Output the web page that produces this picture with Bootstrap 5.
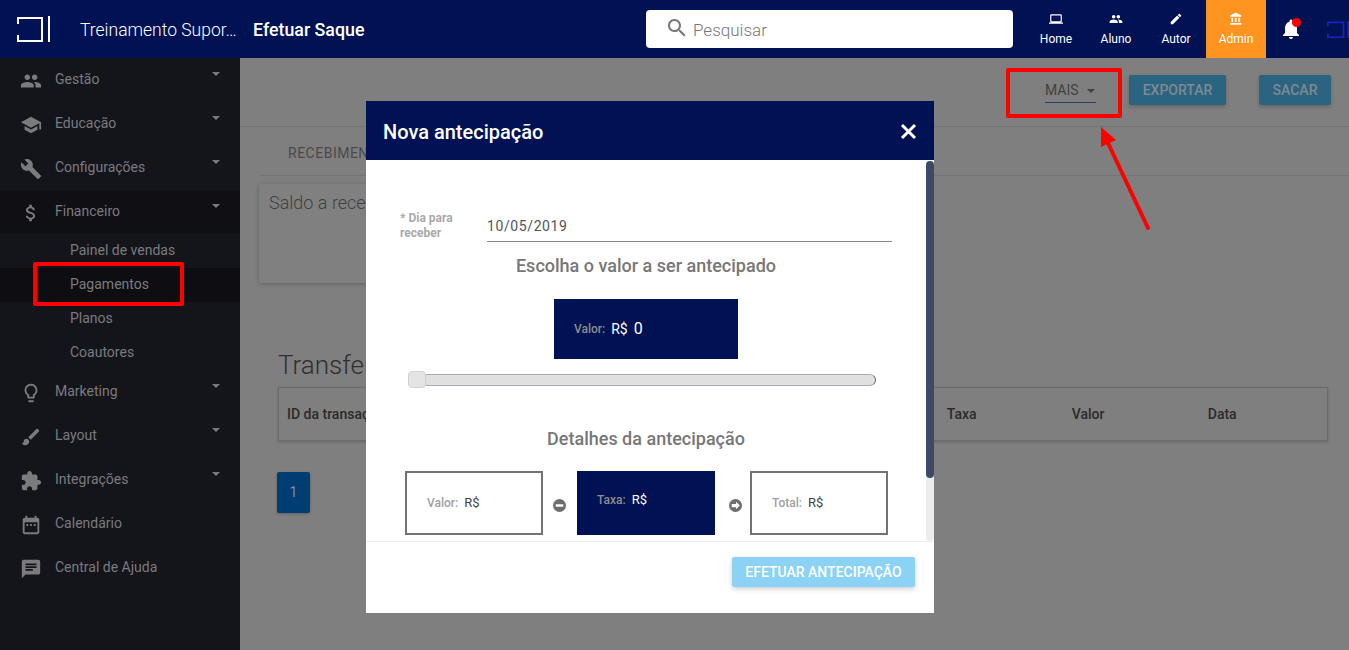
<!DOCTYPE html>
<html lang="en">
<head>
  <meta charset="UTF-8" />
  <title>Efetuar Saque</title>
  <meta name="viewport" content="width=device-width, initial-scale=1.0" />
  <link href="https://cdn.jsdelivr.net/npm/bootstrap@5.3.2/dist/css/bootstrap.min.css" rel="stylesheet" />
  <style>
    html, body { height: 650px; overflow: hidden; }
    body { font-family: Roboto, "Liberation Sans", sans-serif; background-color: #7f7f7f; position: relative; }
    svg { fill: currentColor; display: block; flex-shrink: 0; }

    /* top bar */
    .top-bar { height: 58px; background-color: #001254; color: #fff; }
    .brand-logo { width: 33px; height: 26px; margin-left: 17px; margin-right: 30px; }
    .course-name { width: 162px; font-size: 17.5px; font-weight: 300; white-space: nowrap; padding-top: 2px; }
    .page-name { font-size: 17.8px; font-weight: 500; margin-left: 11px; width: 393px; padding-top: 2px; }
    .search-box { width: 367px; height: 38px; background: #fff; border-radius: 4px; color: #777; font-size: 17px; font-weight: 300; padding-left: 19px; gap: 4px; margin-right: 13px; }
    .search-box span { padding-top: 3px; }
    .search-box svg { margin-top: -3px; }
    .top-link { width: 60px; height: 58px; font-size: 12px; padding-top: 12px; gap: 4px; color: #fff; }
    .top-link.is-active { background-color: #ff9421; }
    .bell-wrap { position: relative; width: 50px; height: 58px; }
    .bell-dot { position: absolute; width: 9px; height: 9px; border-radius: 50%; background: #f00; left: 26px; top: 18px; }
    .corner-logo { width: 22px; height: 17px; margin-top: 21px; margin-left: 11px; }

    /* sidebar */
    .side-nav { width: 240px; height: 592px; background-color: #14141b; color: #7b7b7e; font-size: 14px; }
    .side-row { height: 44px; padding-left: 20px; padding-right: 19px; }
    .side-row svg { width: 22px; height: 22px; margin-top: 1px; margin-right: 13px; }
    .side-row span { margin-top: -1px; }
    .side-row.is-open { background-color: #0f0f14; }
    .side-caret { width: 0; height: 0; border: 4px solid transparent; border-top-color: #7b7b7e; border-bottom: 0; margin-left: auto; margin-right: 1px; margin-top: -12px; }
    .sub-row { height: 34px; padding-left: 70px; padding-top: 6px; }
    .sub-row.is-current { background-color: #0e0e12; }

    /* page behind the modal */
    .page-main { height: 592px; width: 1109px; color: #3b3b3b; }
    .action-bar { height: 69px; border-bottom: 1px solid #747474; padding-top: 17px; }
    .more-btn { width: 51px; height: 25px; margin-right: 33px; font-size: 14px; color: #414141; border-bottom: 1px solid #1f4468; margin-top: 3px; }
    .more-btn i { width: 0; height: 0; border: 4px solid transparent; border-top-color: #414141; border-bottom: 0; margin-left: 8px; margin-top: 2px; }
    .dim-btn { height: 30px; background-color: #2b6480; color: #7f8a90; font-size: 14px; font-weight: 500; border-radius: 2px; box-shadow: 0 2px 4px rgba(0,0,0,.2); }
    .export-btn { width: 97px; margin-right: 33px; }
    .sacar-btn { width: 72px; margin-right: 18px; }
    .tab-row { margin-left: 19px; height: 49px; border-bottom: 1px solid #747474; padding-left: 29px; padding-top: 16px; font-size: 14px; color: #4a4a4a; letter-spacing: .5px; }
    .saldo-card { margin: 8px 0 0 19px; width: 400px; height: 99px; background: #808080; border-radius: 2px; box-shadow: 0 1px 4px rgba(0,0,0,.25); padding: 5px 10px; font-size: 18px; font-weight: 300; color: #404040; }
    .transfer-title { font-size: 26px; font-weight: 300; margin: 67px 0 7px 38px; line-height: 30px; color: #2f2f2f; }
    .transfer-table { margin-left: 38px; width: 1050px; height: 54px; border: 1px solid #6b6b6b; box-shadow: 0 1px 3px rgba(0,0,0,.2); font-size: 14px; font-weight: 500; color: #2b2b2b; padding-left: 8px; }
    .col-taxa { margin-left: 562px; width: 125px; }
    .col-valor { width: 136px; }
    .page-one { margin: 31px 0 0 37px; width: 33px; height: 41px; background: #003d73; color: #7f8f9f; font-size: 14px; border-radius: 2px; box-shadow: 0 1px 3px rgba(0,0,0,.25); }

    /* modal */
    .modal-place { position: absolute; left: 366px; top: 101px; width: 568px; height: 512px; }
    .modal-place .modal-content { height: 512px; border: 0; border-radius: 0; background: #fff; }
    .modal-place .modal-header { height: 59px; background-color: #001254; color: #fff; border: 0; border-radius: 0; padding: 2px 17px 0; flex-shrink: 0; }
    .modal-place .modal-title { font-size: 20px; font-weight: 500; }
    .close-x { width: 17px; height: 17px; stroke: #fff; stroke-width: 3; }
    .scroll-body { position: relative; height: 380px; margin-top: 1px; overflow: hidden; flex: none; padding: 0; }
    .scroll-track { position: absolute; right: 0; top: 0; width: 8px; height: 380px; background: #ececec; border-radius: 4px; }
    .scroll-thumb { width: 8px; height: 317px; background: #3c4a68; border-radius: 4px; }
    .date-row { padding: 50px 34px 0; height: 81px; }
    .date-label { width: 87px; font-size: 12px; font-weight: 700; color: #a9a9a9; line-height: 15px; }
    .date-value { width: 405px; height: 31px; border-bottom: 1px solid #8a8a8a; font-size: 14px; color: #555; letter-spacing: .6px; padding-top: 5px; }
    .section-title { font-size: 18px; font-weight: 500; color: #777; text-align: center; width: 560px; line-height: 20px; }
    .choose-title { margin-top: 14px; }
    .value-box { width: 184px; height: 60px; margin: 23px 0 0 188px; background: #001254; color: #fff; padding-left: 20px; font-size: 14px; }
    .tiny-label { font-size: 12px; font-weight: 500; color: #8d8d8d; margin-right: 6px; }
    .big-zero { font-size: 16px; margin-left: 6px; }
    .slider-track { position: relative; width: 458px; height: 12px; margin: 15px 0 0 52px; background: #e0e0e0; border: 1px solid #a9a9b3; border-right-color: #66666e; border-radius: 0 6px 6px 0; }
    .slider-thumb { position: absolute; left: -11px; top: -4px; width: 18px; height: 17px; background: #e4e4e4; border: 1px solid #d2d2d2; border-radius: 4px; }
    .detail-title { margin-top: 43px; }
    .detail-row { margin: 22px 0 0 39px; width: 483px; }
    .detail-box { width: 138px; height: 64px; border: 2px solid #737373; padding-left: 20px; font-size: 13px; color: #444; }
    .detail-box.is-dark { background: #001254; border-color: #001254; color: #fff; padding-left: 18px; padding-bottom: 6px; }
    .detail-box .tiny-label { color: #a0a0a0; }
    .detail-box.is-dark .tiny-label { color: #8d8d8d; }
    .sign-icon { width: 13px; height: 13px; margin-top: 4px; color: #6d6d6d; }
    .sign-minus { width: 34px; padding-left: 10px; }
    .sign-equal { width: 35px; padding-left: 14px; }
    .modal-place .modal-footer { height: 72px; border-top: 1px solid #eee; padding: 15px 19px 0 0; align-items: flex-start; border-radius: 0; flex: none; }
    .antecipar-btn { width: 183px; height: 30px; margin: 0; padding-top: 1px; background: #8bd2f5; color: #fff; font-size: 14px; font-weight: 500; border-radius: 2px; box-shadow: 0 2px 5px rgba(0,0,0,.2); }

    /* red annotations */
    .note-box { position: absolute; border: 4px solid #f00; border-radius: 2px; }
    .note-more { left: 1006px; top: 68px; width: 116px; height: 50px; }
    .note-pay { left: 33px; top: 262px; width: 151px; height: 44px; }
    .note-arrow { position: absolute; left: 1090px; top: 115px; width: 70px; height: 125px; }
  </style>
</head>
<body>
  <header class="top-bar d-flex align-items-center">
    <svg class="brand-logo" viewBox="0 0 33 26" style="fill:none;stroke:#fff;stroke-width:2"><path d="M1 8V2h24v23H1v-6M32 0v26"/></svg>
    <div class="course-name">Treinamento Supor…</div>
    <div class="page-name">Efetuar Saque</div>
    <div class="search-box d-flex align-items-center">
      <svg width="24" height="24" viewBox="0 0 24 24"><path d="M15.5 14h-.79l-.28-.27C15.41 12.59 16 11.11 16 9.5 16 5.91 13.09 3 9.5 3S3 5.91 3 9.5 5.91 16 9.5 16c1.61 0 3.09-.59 4.23-1.57l.27.28v.79l5 4.99L20.49 19l-4.99-5zm-6 0C7.01 14 5 11.99 5 9.5S7.01 5 9.5 5 14 7.01 14 9.5 11.99 14 9.5 14z"/></svg>
      <span>Pesquisar</span>
    </div>
    <a class="top-link d-flex flex-column align-items-center text-decoration-none">
      <svg width="14" height="14" viewBox="0 0 24 24"><path d="M20 18c1.1 0 1.99-.9 1.99-2L22 6c0-1.1-.9-2-2-2H4c-1.1 0-2 .9-2 2v10c0 1.1.9 2 2 2H0v2h24v-2h-4zM4 6h16v10H4V6z"/></svg>
      Home
    </a>
    <a class="top-link d-flex flex-column align-items-center text-decoration-none">
      <svg width="14" height="14" viewBox="0 0 24 24"><path d="M16 11c1.66 0 2.99-1.34 2.99-3S17.66 5 16 5c-1.66 0-3 1.34-3 3s1.34 3 3 3zm-8 0c1.66 0 2.99-1.34 2.99-3S9.66 5 8 5C6.34 5 5 6.34 5 8s1.34 3 3 3zm0 2c-2.33 0-7 1.17-7 3.5V19h14v-2.5c0-2.33-4.67-3.5-7-3.5zm8 0c-.29 0-.62.02-.97.05 1.16.84 1.97 1.97 1.97 3.45V19h6v-2.5c0-2.33-4.67-3.5-7-3.5z"/></svg>
      Aluno
    </a>
    <a class="top-link d-flex flex-column align-items-center text-decoration-none">
      <svg width="14" height="14" viewBox="0 0 24 24"><path d="M3 17.25V21h3.75L17.81 9.94l-3.75-3.75L3 17.25zM20.71 7.04c.39-.39.39-1.02 0-1.41l-2.34-2.34c-.39-.39-1.02-.39-1.41 0l-1.83 1.83 3.75 3.75 1.83-1.83z"/></svg>
      Autor
    </a>
    <a class="top-link is-active d-flex flex-column align-items-center text-decoration-none">
      <svg width="14" height="14" viewBox="0 0 24 24"><path d="M4 10v7h3v-7H4zm6 0v7h3v-7h-3zM2 22h19v-3H2v3zm14-12v7h3v-7h-3zm-4.5-9L2 6v2h19V6l-9.5-5z"/></svg>
      Admin
    </a>
    <div class="bell-wrap d-flex align-items-center justify-content-center">
      <svg width="24" height="24" viewBox="0 0 24 24"><path d="M12 22c1.1 0 2-.9 2-2h-4c0 1.1.89 2 2 2zm6-6v-5c0-3.07-1.64-5.64-4.5-6.32V4c0-.83-.67-1.5-1.5-1.5s-1.5.67-1.5 1.5v.68C7.63 5.36 6 7.92 6 11v5l-2 2v1h16v-1l-2-2z"/></svg>
      <span class="bell-dot"></span>
    </div>
    <svg class="corner-logo align-self-start" viewBox="0 0 33 26" style="fill:none;stroke:#1b22c4;stroke-width:2.6"><path d="M1 8V2h24v23H1v-6M32 0v26"/></svg>
  </header>

  <div class="d-flex">
    <nav class="side-nav">
      <div class="side-row d-flex align-items-center">
        <svg viewBox="0 0 24 24"><path d="M16 11c1.66 0 2.99-1.34 2.99-3S17.66 5 16 5c-1.66 0-3 1.34-3 3s1.34 3 3 3zm-8 0c1.66 0 2.99-1.34 2.99-3S9.66 5 8 5C6.34 5 5 6.34 5 8s1.34 3 3 3zm0 2c-2.33 0-7 1.17-7 3.5V19h14v-2.5c0-2.33-4.67-3.5-7-3.5zm8 0c-.29 0-.62.02-.97.05 1.16.84 1.97 1.97 1.97 3.45V19h6v-2.5c0-2.33-4.67-3.5-7-3.5z"/></svg>
        <span>Gestão</span><i class="side-caret"></i>
      </div>
      <div class="side-row d-flex align-items-center">
        <svg viewBox="0 0 24 24"><path d="M5 13.18v4L12 21l7-3.82v-4L12 17l-7-3.82zM12 3L1 9l11 6 9-4.91V17h2V9L12 3z"/></svg>
        <span>Educação</span><i class="side-caret"></i>
      </div>
      <div class="side-row d-flex align-items-center">
        <svg viewBox="0 0 24 24"><path d="M22.7 19l-9.1-9.1c.9-2.3.4-5-1.5-6.9-2-2-5-2.4-7.4-1.3L9 6 6 9 1.6 4.7C.4 7.1.9 10.1 2.9 12.1c1.9 1.9 4.6 2.4 6.9 1.5l9.1 9.1c.4.4 1 .4 1.4 0l2.3-2.3c.5-.4.5-1.1.1-1.4z"/></svg>
        <span>Configurações</span><i class="side-caret"></i>
      </div>
      <div class="side-row is-open d-flex align-items-center">
        <svg viewBox="0 0 24 24"><path d="M11.8 10.9c-2.27-.59-3-1.2-3-2.15 0-1.09 1.01-1.85 2.7-1.85 1.78 0 2.44.85 2.5 2.1h2.21c-.07-1.72-1.12-3.3-3.21-3.81V3h-3v2.16c-1.94.42-3.5 1.68-3.5 3.61 0 2.31 1.91 3.46 4.7 4.13 2.5.6 3 1.48 3 2.41 0 .69-.49 1.79-2.7 1.79-2.06 0-2.87-.92-2.98-2.1h-2.2c.12 2.19 1.76 3.42 3.68 3.83V21h3v-2.15c1.95-.37 3.5-1.5 3.5-3.55 0-2.84-2.43-3.81-4.7-4.4z"/></svg>
        <span>Financeiro</span><i class="side-caret"></i>
      </div>
      <div class="sub-row">Painel de vendas</div>
      <div class="sub-row is-current">Pagamentos</div>
      <div class="sub-row">Planos</div>
      <div class="sub-row">Coautores</div>
      <div class="side-row d-flex align-items-center">
        <svg viewBox="0 0 24 24"><path d="M9 21c0 .55.45 1 1 1h4c.55 0 1-.45 1-1v-1H9v1zm3-19C8.14 2 5 5.14 5 9c0 2.38 1.19 4.47 3 5.74V17c0 .55.45 1 1 1h6c.55 0 1-.45 1-1v-2.26c1.81-1.27 3-3.36 3-5.74 0-3.86-3.14-7-7-7zm2.85 11.1l-.85.6V16h-4v-2.3l-.85-.6C7.8 12.16 7 10.63 7 9c0-2.76 2.24-5 5-5s5 2.24 5 5c0 1.63-.8 3.16-2.15 4.1z"/></svg>
        <span>Marketing</span><i class="side-caret"></i>
      </div>
      <div class="side-row d-flex align-items-center">
        <svg viewBox="0 0 24 24"><path d="M7 14c-1.66 0-3 1.34-3 3 0 1.31-1.16 2-2 2 .92 1.22 2.49 2 4 2 2.21 0 4-1.79 4-4 0-1.66-1.34-3-3-3zm13.71-9.37l-1.34-1.34c-.39-.39-1.02-.39-1.41 0L9 12.25 11.75 15l8.96-8.96c.39-.39.39-1.02 0-1.41z"/></svg>
        <span>Layout</span><i class="side-caret"></i>
      </div>
      <div class="side-row d-flex align-items-center">
        <svg viewBox="0 0 24 24"><path d="M20.5 11H19V7c0-1.1-.9-2-2-2h-4V3.5C13 2.12 11.88 1 10.5 1S8 2.12 8 3.5V5H4c-1.1 0-1.99.9-1.99 2v3.8H3.5c1.49 0 2.7 1.21 2.7 2.7s-1.21 2.7-2.7 2.7H2V20c0 1.1.9 2 2 2h3.8v-1.5c0-1.49 1.21-2.7 2.7-2.7 1.49 0 2.7 1.21 2.7 2.7V22H17c1.1 0 2-.9 2-2v-4h1.5c1.38 0 2.5-1.12 2.5-2.5S21.88 11 20.5 11z"/></svg>
        <span>Integrações</span><i class="side-caret"></i>
      </div>
      <div class="side-row d-flex align-items-center">
        <svg viewBox="0 0 24 24"><path d="M19 4h-1V2h-2v2H8V2H6v2H5c-1.1 0-2 .9-2 2v14c0 1.1.9 2 2 2h14c1.1 0 2-.9 2-2V6c0-1.1-.9-2-2-2zm0 16H5V9h14v11zM7 11h2v2H7zm4 0h2v2h-2zm4 0h2v2h-2z"/></svg>
        <span>Calendário</span>
      </div>
      <div class="side-row d-flex align-items-center">
        <svg viewBox="0 0 24 24"><path d="M20 2H4c-1.1 0-1.99.9-1.99 2L2 22l4-4h14c1.1 0 2-.9 2-2V4c0-1.1-.9-2-2-2zM6 9h12v2H6V9zm8 5H6v-2h8v2zm4-6H6V6h12v2z"/></svg>
        <span>Central de Ajuda</span>
      </div>
    </nav>

    <main class="page-main">
      <div class="action-bar d-flex justify-content-end">
        <div class="more-btn d-flex align-items-center">MAIS<i></i></div>
        <div class="dim-btn export-btn d-flex align-items-center justify-content-center">EXPORTAR</div>
        <div class="dim-btn sacar-btn d-flex align-items-center justify-content-center">SACAR</div>
      </div>
      <div class="tab-row">RECEBIMENTOS</div>
      <div class="saldo-card">Saldo a receber</div>
      <h2 class="transfer-title">Transferências</h2>
      <div class="transfer-table d-flex align-items-center">
        <span>ID da transação</span>
        <span class="col-taxa">Taxa</span>
        <span class="col-valor">Valor</span>
        <span>Data</span>
      </div>
      <div class="page-one d-flex align-items-center justify-content-center">1</div>
    </main>
  </div>

  <div class="modal-place">
    <div class="modal-content">
      <div class="modal-header">
        <h5 class="modal-title">Nova antecipação</h5>
        <svg class="close-x ms-auto" viewBox="0 0 17 17"><path d="M2 2l13 13M15 2L2 15"/></svg>
      </div>
      <div class="modal-body scroll-body">
        <div class="date-row d-flex">
          <div class="date-label">* Dia para receber</div>
          <div class="date-value">10/05/2019</div>
        </div>
        <div class="section-title choose-title">Escolha o valor a ser antecipado</div>
        <div class="value-box d-flex align-items-center">
          <span class="tiny-label">Valor:</span>R$<span class="big-zero">0</span>
        </div>
        <div class="slider-track"><div class="slider-thumb"></div></div>
        <div class="section-title detail-title">Detalhes da antecipação</div>
        <div class="detail-row d-flex align-items-center">
          <div class="detail-box d-flex align-items-center"><span class="tiny-label">Valor:</span>R$</div>
          <div class="sign-minus">
            <svg class="sign-icon" viewBox="0 0 12 12"><path fill-rule="evenodd" d="M6 0a6 6 0 1 1 0 12A6 6 0 0 1 6 0zM2.5 4.8v2.4h7V4.8z"/></svg>
          </div>
          <div class="detail-box is-dark d-flex align-items-center"><span class="tiny-label">Taxa:</span>R$</div>
          <div class="sign-equal">
            <svg class="sign-icon" viewBox="0 0 12 12"><path fill-rule="evenodd" d="M6 0a6 6 0 1 1 0 12A6 6 0 0 1 6 0zM2.5 4.5v3H6.5V9.5L10 6 6.5 2.5v2z"/></svg>
          </div>
          <div class="detail-box d-flex align-items-center"><span class="tiny-label">Total:</span>R$</div>
        </div>
        <div class="scroll-track"><div class="scroll-thumb"></div></div>
      </div>
      <div class="modal-footer">
        <div class="antecipar-btn d-flex align-items-center justify-content-center">EFETUAR ANTECIPAÇÃO</div>
      </div>
    </div>
  </div>

  <div class="note-box note-more"></div>
  <div class="note-box note-pay"></div>
  <svg class="note-arrow" viewBox="0 0 70 125"><path d="M18 28L58 113" style="fill:none;stroke:#f00;stroke-width:4;stroke-linecap:round"/><path d="M11 12v20l15-7z" style="fill:#f00"/></svg>
</body>
</html>
